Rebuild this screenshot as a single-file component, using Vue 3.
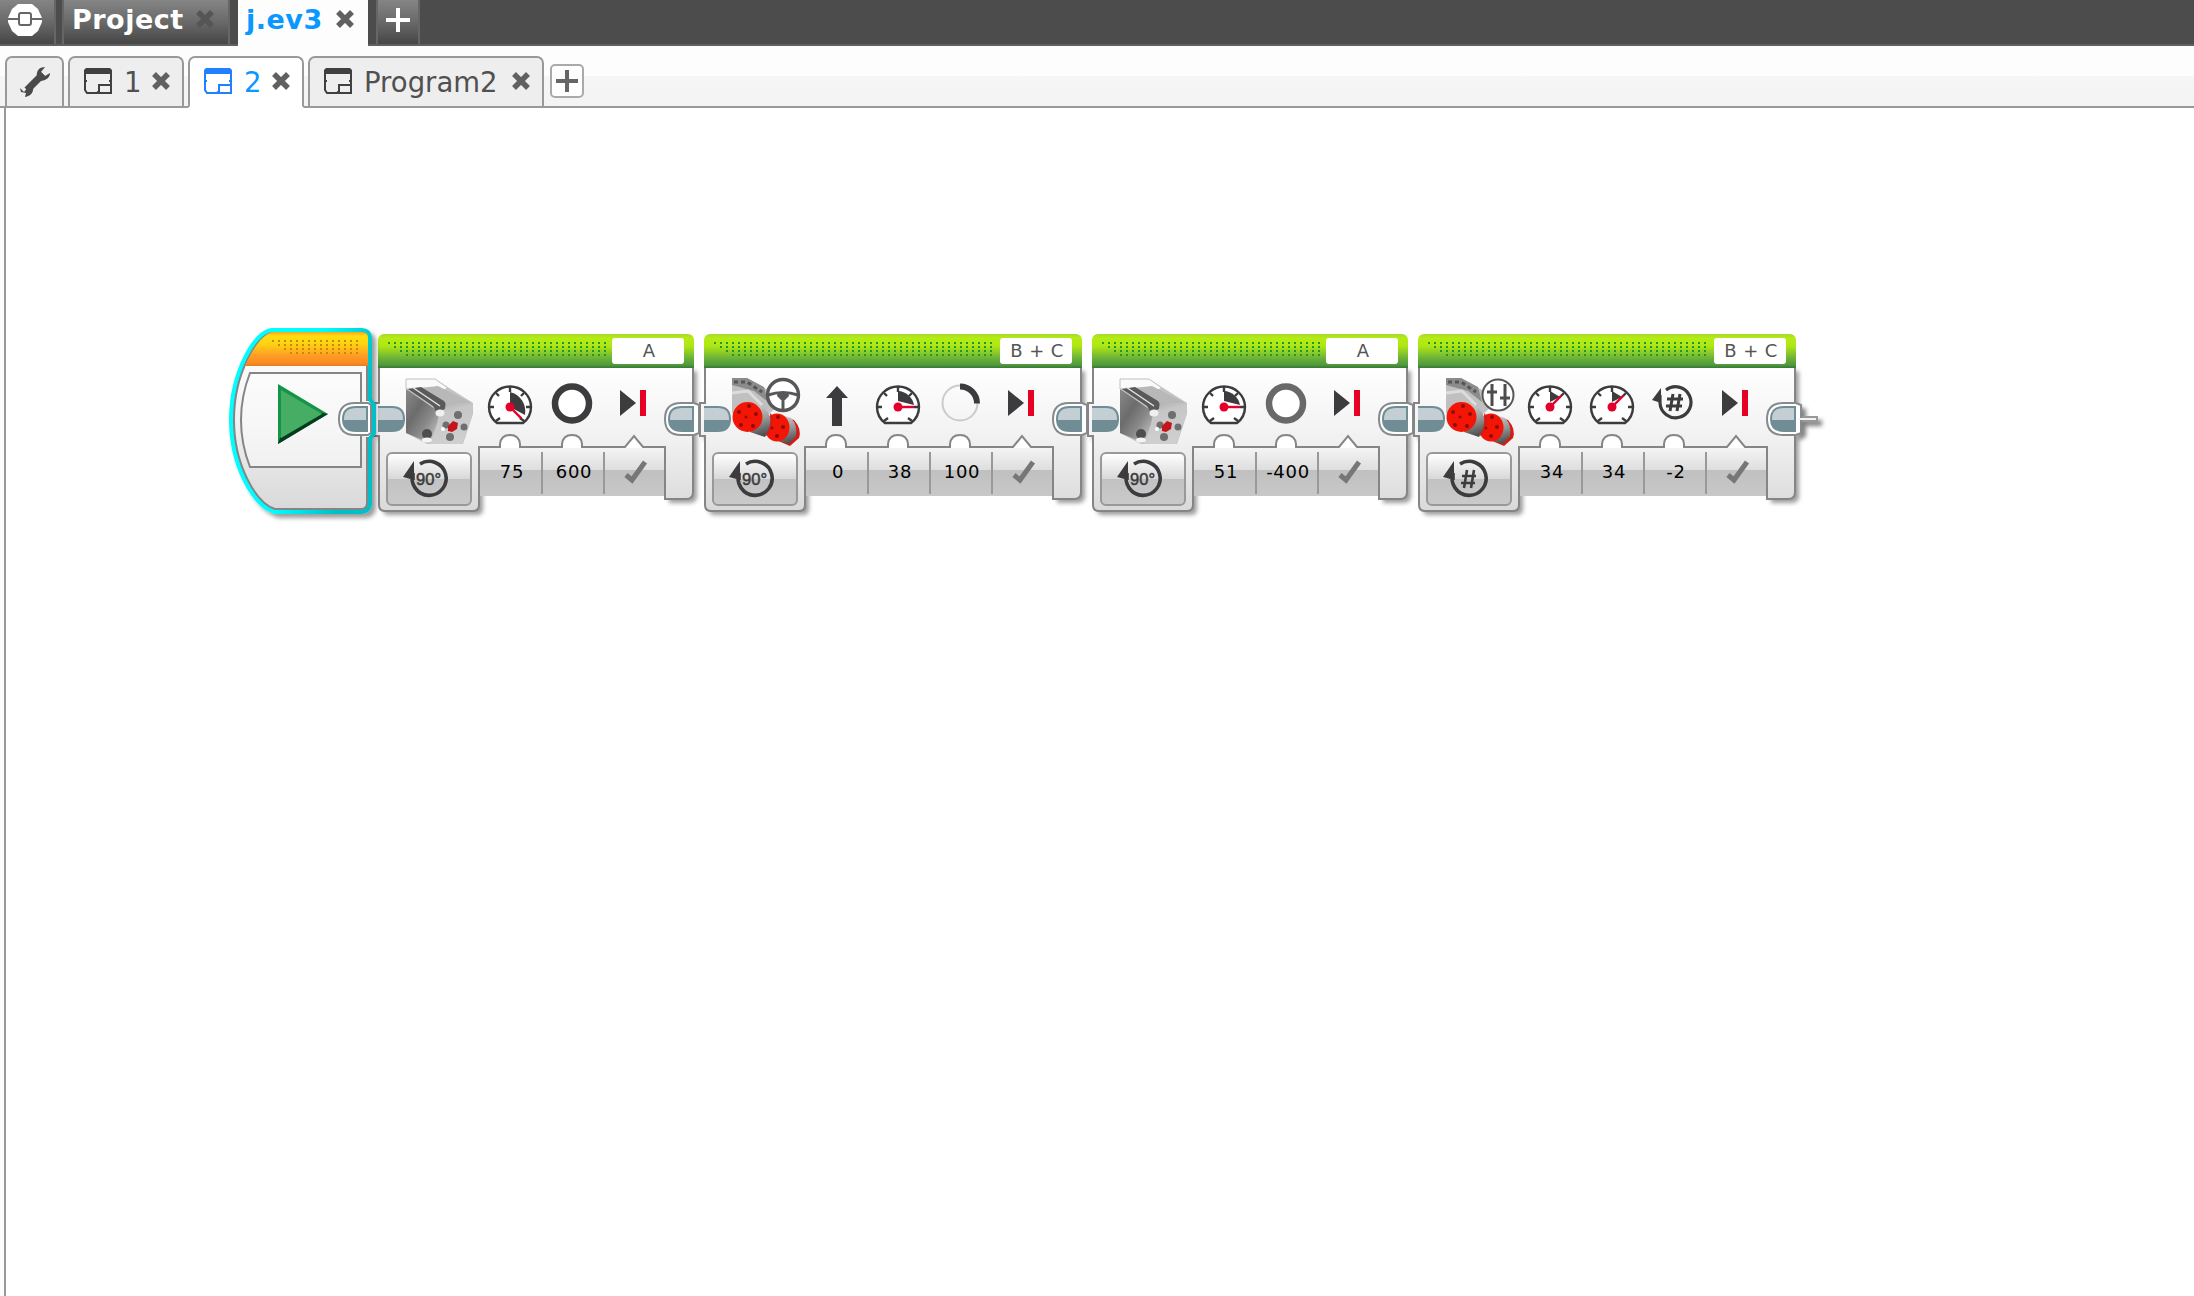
<script setup>
const gauge = (angle, wedge) => ({ kind: 'gauge', angle, wedge })
const blocks = [
  { motor: 'medium', port: 'A', mode: '90°', params: [
    { icon: gauge(135, 'M0 -15 A20 20 0 0 1 15 8 L0 0Z'), value: '75' },
    { icon: { kind: 'ring', color: '#3c3c3e' }, value: '600' },
    { icon: { kind: 'end' }, check: true } ] },
  { motor: 'large', badge: 'wheel', port: 'B + C', mode: '90°', params: [
    { icon: { kind: 'up' }, value: '0' },
    { icon: gauge(90, 'M0 -16 A17 17 0 0 1 16 -2 L0 -6Z'), value: '38' },
    { icon: { kind: 'arc' }, value: '100' },
    { icon: { kind: 'end' }, check: true } ] },
  { motor: 'medium', port: 'A', mode: '90°', params: [
    { icon: gauge(90, 'M0 -16 A17 17 0 0 1 16 -2 L0 -6Z'), value: '51' },
    { icon: { kind: 'ring', color: '#69696b' }, value: '-400' },
    { icon: { kind: 'end' }, check: true } ] },
  { motor: 'large', badge: 'sliders', port: 'B + C', mode: '#', params: [
    { icon: gauge(45, 'M0 -16 L10 -10 L0 -5Z'), value: '34' },
    { icon: gauge(45, 'M0 -16 L10 -10 L0 -5Z'), value: '34' },
    { icon: { kind: 'turns' }, value: '-2' },
    { icon: { kind: 'end' }, check: true } ] }
]
const tabs = [{ name: '1' }, { name: '2', active: true }, { name: 'Program2', wide: true }]

const width = (b) => 130 + b.params.length * 62
function bodyPath(b) {
  const n = b.params.length
  const w = width(b)
  let d = `M1 33V69H-4V102H1V171Q1 177 7 177H95Q101 177 101 171V113`
  for (let i = 0; i < n; i++) {
    const c = 132 + i * 62
    d += i === n - 1
      ? `H${c - 9}L${c} 102L${c + 9} 113`
      : `H${c - 10}V110Q${c - 9} 101 ${c} 101Q${c + 9} 101 ${c + 10} 110V113`
  }
  const e = 101 + n * 62
  return d + `H${e}V165H${w - 8}Q${w - 1} 165 ${w - 1} 158V33Z`
}
</script>

<template>
  <div class="app">
    <svg width="0" height="0" class="defs">
      <defs>
        <linearGradient id="body" x1="0" y1="0" x2="0" y2="1">
          <stop offset="0" stop-color="#fff" /><stop offset=".5" stop-color="#f1f1f1" /><stop offset="1" stop-color="#d9d9d9" />
        </linearGradient>
        <linearGradient id="pin" x1="0" y1="0" x2="0" y2="1">
          <stop offset=".54" stop-color="#c4cfd4" /><stop offset=".54" stop-color="#708d95" />
        </linearGradient>
        <linearGradient id="orange" x1="0" y1="0" x2="0" y2="1">
          <stop offset="0" stop-color="#fda421" /><stop offset=".12" stop-color="#fddf0f" /><stop offset=".35" stop-color="#fed214" />
          <stop offset=".7" stop-color="#ff9c25" /><stop offset=".9" stop-color="#fb8b20" /><stop offset="1" stop-color="#e77d22" />
        </linearGradient>
        <linearGradient id="cyan" x1="0" y1="0" x2="1" y2=".35">
          <stop offset="0" stop-color="#00ffff" /><stop offset=".6" stop-color="#00fbff" /><stop offset="1" stop-color="#00bfc6" />
        </linearGradient>
        <linearGradient id="steel" x1="0" y1="0" x2="1" y2="1">
          <stop offset="0" stop-color="#8a8a8a" /><stop offset=".35" stop-color="#6c6c6c" /><stop offset=".6" stop-color="#8a8a8a" /><stop offset="1" stop-color="#dadada" />
        </linearGradient>
        <linearGradient id="face" x1="0" y1="0" x2=".3" y2="1">
          <stop offset="0" stop-color="#a8a8a8" /><stop offset=".3" stop-color="#c6c6c6" /><stop offset="1" stop-color="#cfcfcf" />
        </linearGradient>
        <linearGradient id="barrel" x1=".3" y1="0" x2=".5" y2="1">
          <stop offset="0" stop-color="#d5d5d5" /><stop offset=".5" stop-color="#9a9a9a" /><stop offset="1" stop-color="#4c4c4c" />
        </linearGradient>
        <filter id="shade" x="-10%" y="-10%" width="125%" height="125%">
          <feDropShadow dx="4" dy="4" stdDeviation="2.2" flood-color="#000" flood-opacity=".38" />
        </filter>
        <filter id="stub" filterUnits="userSpaceOnUse" x="-10" y="65" width="60" height="50">
          <feDropShadow dx="4" dy="4" stdDeviation="2.2" flood-color="#000" flood-opacity=".5" />
        </filter>
      </defs>
    </svg>

    <header class="projects">
      <div class="cell logo">
        <svg width="34" height="32" viewBox="0 0 34 32">
          <path d="M10 0H24L30 5L34 14V18L30 27L24 32H10L4 27L0 18V14L4 5Z" fill="#fff" />
          <path d="M0 15H11M23 15H34" stroke="#666" stroke-width="2" />
          <rect x="11" y="9" width="12" height="12" rx="2" fill="#fff" stroke="#666" stroke-width="2" />
        </svg>
      </div>
      <div class="cell project">
        <span>Project</span>
        <svg class="x dim" width="18" height="18" viewBox="0 0 18 18"><path d="M2 2L16 16M16 2L2 16" /></svg>
      </div>
      <div class="current">
        <span>j.ev3</span>
        <svg class="x" width="18" height="18" viewBox="0 0 18 18"><path d="M2 2L16 16M16 2L2 16" /></svg>
      </div>
      <div class="cell add">
        <svg width="24" height="24" viewBox="0 0 24 24"><path d="M12 0V24M0 12H24" stroke="#fff" stroke-width="4" /></svg>
      </div>
    </header>

    <nav class="programs">
      <div class="tab tool">
        <svg width="32" height="32" viewBox="0 0 32 32">
          <path d="M8 24L24 8" stroke="#4a4a4a" stroke-width="7" />
          <path d="M26 1C20 1 17 5 18 11L22 15C28 14 31 11 31 7L26 10L22 6Z M1 22L5 26L9 21L14 21C15 26 12 30 6 31L7 27L2 26Z" fill="#4a4a4a" />
        </svg>
      </div>
      <div v-for="t in tabs" :key="t.name" class="tab" :class="{ on: t.active, wide: t.wide }">
        <svg class="doc" width="28" height="27" viewBox="0 0 28 27">
          <path d="M2 0H26L28 2V6H0V2Z" fill="currentColor" />
          <path d="M1 5V22L3 25H13L15 23M27 5V25H15V17H27M0 13H3M25 13H28" fill="none" stroke="currentColor" stroke-width="2" />
        </svg>
        <span>{{ t.name }}</span>
        <svg class="x" width="18" height="18" viewBox="0 0 18 18"><path d="M2 2L16 16M16 2L2 16" /></svg>
      </div>
      <div class="plus">
        <svg width="22" height="22" viewBox="0 0 22 22"><path d="M11 0V22M0 11H22" stroke="#666" stroke-width="4" /></svg>
      </div>
    </nav>

    <main class="canvas">
      <div class="sequence">
        <svg class="start" width="150" height="200" viewBox="228 324 150 200">
          <path d="M272 333H362Q367 333 367 338V503Q367 509 361 509H275C256 503 234 465 234 420C234 372 258 334 272 333Z" fill="none" stroke="url(#cyan)" stroke-width="10" filter="url(#shade)" />
          <path d="M272 333H362Q367 333 367 338V503Q367 509 361 509H275C256 503 234 465 234 420C234 372 258 334 272 333Z" fill="url(#body)" stroke="#858585" stroke-width="2" />
          <path d="M272 332H362Q368 332 368 338V366H245C252 350 262 335 272 332Z" fill="url(#orange)" />
          <g stroke="#c98a00" stroke-width="2" stroke-dasharray="2 4">
            <path d="M272 341H360M278 345H360M284 349H360M290 353H360" />
          </g>
          <path d="M250 373H361V467H250Q241 444 241 420Q241 396 250 373Z" fill="#fff" fill-opacity=".45" stroke="#858585" stroke-width="2" />
          <path d="M278 384V444L328 414Z" fill="#149447" />
          <path d="M278 444L328 414L322 413L280 438Z" fill="#063c1d" />
          <path d="M281 390V438L322 414Z" fill="#46ad65" />
          <path d="M365 401H373V437H365Z" fill="#fff" />
          <path d="M368 403H355Q339 403 339 419T355 435H368L371 433V405Z" fill="#fff" stroke="#858b8d" stroke-width="2" />
          <path d="M367 407H356Q343 407 343 419T356 431H367Z" fill="url(#pin)" stroke="#708d95" stroke-width="2" />
          <path d="M369 398L374 405V433L369 440" fill="none" stroke="#00bfc6" stroke-width="4" />
        </svg>

        <section v-for="(b, i) in blocks" :key="i" class="block" :style="{ width: width(b) + 'px' }">
          <svg class="chassis" :width="width(b)" height="178">
            <path :d="bodyPath(b)" fill="#fff" filter="url(#shade)" />
            <rect x="102" y="100" :width="b.params.length * 62 - 1" height="62" fill="#fff" />
          </svg>
          <div class="strip" :style="{ width: b.params.length * 62 + 'px' }">
            <div v-for="(p, k) in b.params" :key="k" class="value">
              <span v-if="!p.check">{{ p.value }}</span>
              <svg v-else width="24" height="24" viewBox="0 0 24 24"><path d="M2 15L8 20L21 2" fill="none" stroke="#777" stroke-width="5" /></svg>
            </div>
          </div>
          <svg class="chassis" :width="width(b)" height="178">
            <path :d="bodyPath(b)" fill="url(#body)" stroke="#858585" stroke-width="2" />
            <path d="M0 73H14Q26 73 26 85T14 97H0Z" fill="url(#pin)" />
            <path d="M0 73H14Q26 73 26 85T14 97H0" fill="none" stroke="#708d95" stroke-width="2" />
            <g :transform="`translate(${width(b)} 0)`">
              <path v-if="i === 3" d="M0 70L5 72V83H21V87H5V98L0 101Z" fill="#eee" stroke="#999" stroke-width="2" filter="url(#stub)" />
              <path d="M0 69H-13Q-29 69 -29 85T-13 101H0L5 99V71Z" fill="#fff" stroke="#858b8d" stroke-width="2" />
              <path v-if="i === 3" d="M3 84H20V86H3Z" fill="#f2f2f2" />
              <path d="M-1 73H-12Q-25 73 -25 85T-12 97H-1Z" fill="url(#pin)" stroke="#708d95" stroke-width="2" />
            </g>
          </svg>

          <div class="top">
            <svg class="dots" :width="width(b) - 98" height="14">
              <g stroke="#1d9a2c" stroke-width="2" stroke-dasharray="2 4">
                <path v-for="r in 4" :key="r" :d="`M${(r - 1) * 6} ${r * 4 - 3}H${width(b) - 98}`" />
              </g>
            </svg>
            <div class="port">{{ b.port }}</div>
          </div>

          <div class="icons">
            <svg class="motor" width="68" height="68" viewBox="0 0 68 68">
              <template v-if="b.motor === 'medium'">
                <path d="M0 1H29L67 25V36L57 66H21L0 55Z" fill="#c4c4c4" />
                <path d="M0 11L36 36L24 65L0 55Z" fill="url(#steel)" />
                <path d="M0 1H29L42 10L38 12L15 10L0 11Z" fill="#fafafa" stroke="#c0c0c0" />
                <path d="M14 10L32 8L66 25L40 26Z" fill="#b8b8b8" />
                <path d="M2 11L15 9L38 23Q41 26 39 31L31 35L27 28Z" fill="#5a5a5a" />
                <path d="M6 9L34 28" stroke="#e4e4e4" stroke-width="1.500" />
                <path d="M40 25L67 26L66 37L56 66H24L31 46L33 36L39 31Z" fill="url(#face)" />
                <ellipse cx="34" cy="35" rx="4.500" ry="3.500" fill="#efefef" />
                <g fill="#6f6f6f"><circle cx="52" cy="37" r="4" /><circle cx="58" cy="49" r="3.500" /><circle cx="44" cy="59" r="4" /><circle cx="40" cy="47" r="3.500" /></g>
                <circle cx="21" cy="56" r="5" fill="#4e4e4e" />
                <ellipse cx="21" cy="62" rx="5" ry="2.500" fill="#f4f4f4" />
                <circle cx="37" cy="51" r="2" fill="#fff" />
                <path d="M42 48L47 43L52 45L51 51L46 54L42 53Z" fill="#c4141c" />
              </template>
              <template v-else>
                <path d="M0 0H15L36 12L44 30L32 40L0 35Z" fill="#c0c0c0" />
                <path d="M0 0H15L32 9L36 24L22 13L0 7Z" fill="#8b8b8b" />
                <path d="M2 4H15L30 14" stroke="#555" stroke-width="3" stroke-dasharray="4 3" fill="none" />
                <path d="M0 15L16 13L30 27" stroke="#dcdcdc" stroke-width="3" fill="none" />
                <path d="M44 36L62 42Q70 51 67 60L58 68L44 62Z" fill="#d51c14" />
                <path d="M46 36L59 40Q66 47 64 58L57 66L44 62Z" fill="url(#barrel)" />
                <ellipse cx="45" cy="49.500" rx="12.500" ry="14" fill="#f31606" />
                <path d="M16 25L31 29Q40 36 39 48L33 59L18 54Z" fill="url(#barrel)" />
                <path d="M38 35L41 38Q42 48 36 57L34 58Q40 46 38 35Z" fill="#d51c14" />
                <circle cx="15.500" cy="39" r="15" fill="#f31606" />
                <g fill="#8e0c06"><circle cx="17" cy="28" r="2" /><circle cx="7" cy="34" r="2" /><circle cx="24" cy="36" r="2" /><circle cx="14" cy="39" r="1.500" /><circle cx="9" cy="47" r="2" /><circle cx="21" cy="48" r="2" />
                  <circle cx="46" cy="39" r="2" /><circle cx="40" cy="50" r="1.500" /><circle cx="51" cy="49" r="2" /><circle cx="45" cy="58" r="2" /></g>
                <circle :cx="b.badge === 'wheel' ? 51 : 52" cy="17" r="15.500" fill="#fff" stroke="#57575a" :stroke-width="b.badge === 'wheel' ? 3.4 : 2" />
                <g v-if="b.badge === 'wheel'">
                  <path d="M36 17Q51 12 66 17M51 20V32" stroke="#57575a" stroke-width="3" fill="none" />
                  <path d="M46 14H56L57 18L53 22H49L45 18Z" fill="#57575a" />
                </g>
                <path v-else d="M46 6V28M59 6V28M41 14H51M54 20H64M46 9V17M59 16V23" stroke="#4c4c4e" stroke-width="3" />
              </template>
            </svg>
            <div v-for="(p, k) in b.params" :key="k" class="slot">
              <svg width="48" height="44" viewBox="-24 -24 48 44">
                <g v-if="p.icon.kind === 'gauge'">
                  <path d="M-13 16Q-21 10 -21 0A21 20.500 0 0 1 21 0Q21 10 13 16Z" fill="#fff" stroke="#3c3c3e" stroke-width="2.400" />
                  <path d="M-20 0H-16M16 0H20M-14 -14L-11 -11M14 -14L11 -11M-14 14L-10 11M14 14L10 11M0 -20V-15" stroke="#3c3c3e" stroke-width="2.400" />
                  <path :d="p.icon.wedge" fill="#3c3c3e" />
                  <path d="M0 0V-16" stroke="#e4002b" stroke-width="2.400" :transform="`rotate(${p.icon.angle})`" />
                  <circle r="4.500" fill="#e4002b" />
                </g>
                <circle v-else-if="p.icon.kind === 'ring'" cy="-3.500" r="17" fill="#fff" :stroke="p.icon.color" stroke-width="6.500" />
                <path v-else-if="p.icon.kind === 'up'" d="M1 -21L12 -9H6V19H-4V-9H-10Z" fill="#3c3c3e" />
                <g v-else-if="p.icon.kind === 'arc'" fill="none">
                  <circle cy="-4" r="17.500" stroke="#c9cccc" stroke-width="2" />
                  <path d="M0 -20.500A17 17 0 0 1 17 -3.500" stroke="#3c3c3e" stroke-width="6" />
                </g>
                <g v-else-if="p.icon.kind === 'turns'">
                  <path d="M-8 -17A15.500 15.500 0 1 1 -14 -4V-12" fill="none" stroke="#3c3c3e" stroke-width="3.200" />
                  <path d="M-22 -7L-13 -19V-4Z" fill="#3c3c3e" />
                  <path d="M-1 -13L-4 4M6 -13L3 4M-7 -8H9M-8 -1H8" stroke="#3c3c3e" stroke-width="3" />
                </g>
                <g v-else transform="translate(-1 1)">
                  <path d="M-13 -18L3 -5L-13 8Z" fill="#3c3c3e" /><path d="M7 -18H13V8H7Z" fill="#e60023" />
                </g>
              </svg>
            </div>
          </div>

          <div class="mode">
            <svg width="48" height="44" viewBox="0 0 48 44">
              <path d="M18 8A17 17 0 1 1 11 17V24" fill="none" stroke="#3c3c3e" stroke-width="3.600" />
              <path d="M1 21L12 5V24Z" fill="#3c3c3e" />
              <text v-if="b.mode !== '#'" x="14" y="29" textLength="25" lengthAdjust="spacingAndGlyphs">{{ b.mode }}</text>
              <path v-else d="M25 14L22 32M32 14L29 32M20 20H34M19 27H33" stroke="#3c3c3e" stroke-width="2.600" />
            </svg>
          </div>
        </section>
      </div>
    </main>
  </div>
</template>

<style>
html, body { margin: 0; background: #fff; overflow: hidden; }
</style>

<style scoped>
.app { width: 2194px; height: 1296px; display: flex; flex-direction: column; font-family: "DejaVu Sans", Verdana, sans-serif; background: #fcfcfc; overflow: hidden; }
.app * { box-sizing: border-box; }
.defs { position: absolute; }
svg { display: block; overflow: visible; flex: none; }
.x path { fill: none; stroke: #606060; stroke-width: 5.5; }
.x.dim path { stroke: #555; }

.projects { height: 46px; flex: none; display: flex; background: #4c4c4c; border-bottom: 2px solid #606060; font-size: 27px; font-weight: bold; }
.cell { height: 44px; background: linear-gradient(#858585, #696969 50%, #464646); border-right: 2px solid #666; display: flex; }
.logo { width: 56px; padding: 4px 0 0 8px; }
.project { width: 168px; margin-left: 6px; border-left: 2px solid #666; padding: 4px 0 0 8px; color: #fff; gap: 12px; }
.project span, .current span { line-height: 32px; height: 32px; }
.project span { width: 112px; letter-spacing: .5px; }
.project .x, .current .x { margin-top: 6px; }
.current { width: 130px; height: 46px; margin-left: 8px; background: #fdfdfd; color: #0a97ff; display: flex; padding: 4px 0 0 8px; }
.current span { width: 90px; letter-spacing: .5px; }
.add { width: 44px; margin-left: 8px; border-left: 2px solid #666; padding: 8px 0 0 8px; }

.programs { height: 62px; flex: none; display: flex; padding: 10px 0 0 5px; background: linear-gradient(#fdfdfd 0 30px, #f6f6f6 30px, #f3f3f3); box-shadow: inset 0 -2px #999; font-size: 27.5px; color: #505050; }
.tab { width: 116px; height: 52px; margin-right: 4px; border: 2px solid #999; border-radius: 7px 7px 0 0; background: #eee; display: flex; padding: 10px 12px 0 14px; }
.tab.wide { width: 236px; }
.tab.tool { width: 59px; padding: 8px 0 0 12px; }
.tab span { line-height: 32px; margin: -2px 0 0 12px; }
.tab .x { margin: 4px 0 0 auto; }
.tab .doc { color: #404040; }
.tab.on { background: #fff; border-bottom-color: #fff; color: #0a97ff; }
.tab.on .doc { color: #2080ff; }
.plus { width: 34px; height: 34px; margin: 8px 0 0 2px; border: 2px solid #aaa; border-radius: 5px; background: #fff; padding: 4px; }

.canvas { flex: 1; margin-left: 4px; border-left: 2px solid #999; background: #fff; padding: 216px 0 0 222px; }
.sequence { display: flex; gap: 10px; }
.start { margin-right: -10px; position: relative; z-index: 1; }
.block { position: relative; height: 178px; margin-top: 10px; flex: none; }
.chassis { position: absolute; left: 0; top: 0; }
.top { position: relative; height: 34px; border-radius: 6px 6px 0 0; background: linear-gradient(#a4d832 0, #b5ec12 4px, #b0e616 12px, #62ab3c 26px, #52993a 31px, #34783a); display: flex; justify-content: space-between; padding: 4px 10px; }
.dots { margin-top: 4px; overflow: hidden; width: auto; }
.port { width: 72px; height: 26px; margin-left: -10px; padding-left: 2px; background: #fff; border-radius: 3px; color: #555; font-size: 18px; line-height: 26px; text-align: center; letter-spacing: .4px; flex: none; }
.icons { position: relative; display: flex; height: 84px; padding: 10px 0 0 28px; }
.motor { margin-right: 5px; }
.slot { width: 62px; display: flex; justify-content: center; padding-top: 5px; }
.mode { position: relative; width: 86px; height: 54px; margin-left: 8px; border: 2px solid #999; border-radius: 6px; background: linear-gradient(#fff, #d8d8d8 50%, #c2c2c2 50%, #cacaca); padding: 2px 0 0 14px; }
.mode text { font-family: "Liberation Sans", Arial, sans-serif; font-size: 16px; fill: #3c3c3e; stroke: #3c3c3e; stroke-width: .5px; }
.strip { position: absolute; left: 101px; top: 114px; height: 48px; display: flex; background: linear-gradient(#f4f4f4, #dedede 22px, #c0c0c0 22px, #c8c8c8); }
.value { width: 62px; height: 42px; margin-top: 4px; padding-left: 4px; display: flex; align-items: center; justify-content: center; font-size: 18px; color: #000; letter-spacing: .7px; }
.value span { margin-bottom: 4px; }
.value svg { margin-bottom: 2px; }
.value + .value { border-left: 2px solid #999; padding-left: 2px; }
</style>
